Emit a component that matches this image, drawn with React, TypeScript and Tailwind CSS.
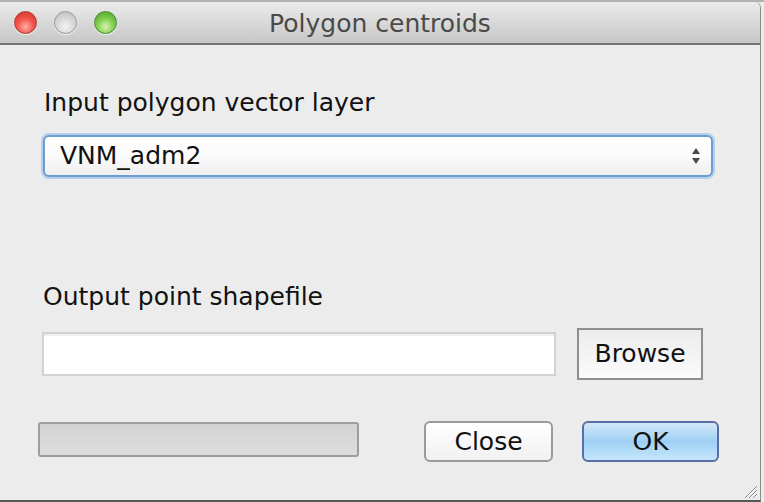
import React from "react";

const font = "font-['DejaVu_Sans','Liberation_Sans',sans-serif]";

function Lights() {
    return (
        <div className="flex items-center gap-[17px] pl-[14px]">
            <div className="w-[23px] h-[23px] rounded-full border border-[#a8403b] bg-[radial-gradient(circle_at_50%_70%,#ffb0a8_0%,#f4534a_45%,#c9302a_100%)] shadow-[0_1px_1px_rgba(255,255,255,0.7)]" />
            <div className="w-[23px] h-[23px] rounded-full border border-[#9c9c9c] bg-[radial-gradient(circle_at_50%_70%,#f4f4f4_0%,#d6d6d6_50%,#b9b9b9_100%)] shadow-[0_1px_1px_rgba(255,255,255,0.7)]" />
            <div className="w-[23px] h-[23px] rounded-full border border-[#4f8b2f] bg-[radial-gradient(circle_at_50%_70%,#d9f5b0_0%,#7fcf4f_45%,#4d9a2a_100%)] shadow-[0_1px_1px_rgba(255,255,255,0.7)]" />
        </div>
    );
}

function Grip() {
    return (
        <svg width="18" height="18" viewBox="0 0 18 18" className="mr-[2px] mb-[1px]">
            <path d="M17 5 L5 17" stroke="#8a8a8a" strokeWidth="1" />
            <path d="M17 6 L6 17" stroke="#ffffff" strokeWidth="1" />
            <path d="M17 9 L9 17" stroke="#8a8a8a" strokeWidth="1" />
            <path d="M17 10 L10 17" stroke="#ffffff" strokeWidth="1" />
            <path d="M17 13 L13 17" stroke="#8a8a8a" strokeWidth="1" />
            <path d="M17 14 L14 17" stroke="#ffffff" strokeWidth="1" />
        </svg>
    );
}

export default function App() {
    return (
        <div className={`w-[764px] h-[502px] flex flex-col bg-[#e9e9e9] ${font}`}>
            <div className="h-[2px] w-full bg-[#b1b1b1]" />
            <div className="flex flex-1">
                <div className="w-[761px] h-[500px] shrink-0 flex flex-col bg-[#ececec] border-r border-[#8c8c8c] border-b-2 border-b-[#565656] rounded-tr-[6px] overflow-hidden">
                    {/* title bar */}
                    <div className="relative h-[43px] shrink-0 flex items-center bg-gradient-to-b from-[#ececec] to-[#c6c6c6] border-b-2 border-[#747474]">
                        <Lights />
                        <span className="absolute inset-x-0 top-[7px] text-center text-[25px] leading-[30px] text-[#4a4a4a]">
                            Polygon centroids
                        </span>
                    </div>

                    {/* body */}
                    <div className="flex flex-col flex-1 pl-[41px]">
                        <div className="mt-[43px] pl-[3px] text-[25px] leading-[30px] text-[#111]">
                            Input polygon vector layer
                        </div>

                        <div className="mt-[15px] w-[674px] h-[46px] shrink-0 rounded-[8px] border-2 border-[#b5cee9]">
                            <div className="h-full rounded-[6px] border-2 border-[#6b9cd2] flex items-center pl-[15px] pr-[10px] bg-gradient-to-b from-[#ffffff] via-[#fbfbfb] to-[#efefef]">
                                <span className="flex-1 text-[25px] leading-[30px] text-[#111]">VNM_adm2</span>
                                <svg width="10" height="20" viewBox="0 0 10 20">
                                    <path d="M5 2 L9 8 L1 8 Z" fill="#4a4a4a" />
                                    <path d="M1 12 L9 12 L5 18 Z" fill="#4a4a4a" />
                                </svg>
                            </div>
                        </div>

                        <div className="mt-[103px] pl-[2px] text-[25px] leading-[30px] text-[#111]">
                            Output point shapefile
                        </div>

                        <div className="mt-[16px] flex items-center">
                            <div className="ml-[1px] w-[514px] h-[44px] shrink-0 border-2 border-[#d2d2d2] bg-white shadow-[inset_0_2px_0_#f0f0f0]" />
                            <button className="ml-[21px] w-[126px] h-[52px] shrink-0 border-2 border-[#8f8f8f] bg-gradient-to-b from-[#ececec] to-[#fbfbfb] text-[25px] leading-[30px] text-[#111]">
                                Browse
                            </button>
                        </div>

                        <div className="mt-[41px] flex items-start">
                            <div className="-ml-[3px] mt-[1px] w-[321px] h-[35px] shrink-0 rounded-[3px] border-2 border-[#9d9d9d] bg-gradient-to-b from-[#d2d2d2] to-[#dedede]" />
                            <button className="ml-[65px] w-[129px] h-[41px] shrink-0 rounded-[6px] border-2 border-[#9a9a9a] bg-gradient-to-b from-[#ffffff] to-[#f1f1f1] text-[25px] leading-[30px] text-[#111]">
                                Close
                            </button>
                            <button className="ml-[29px] w-[137px] h-[41px] shrink-0 rounded-[6px] border-2 border-[#5a6ea6] bg-gradient-to-b from-[#d3e8f9] via-[#9ed0f4] to-[#c5e6fb] text-[25px] leading-[30px] text-[#111]">
                                OK
                            </button>
                        </div>

                        <div className="flex-1 flex items-end justify-end">
                            <Grip />
                        </div>
                    </div>
                </div>
                <div className="flex-1 bg-[#ececec]" />
            </div>
        </div>
    );
}
